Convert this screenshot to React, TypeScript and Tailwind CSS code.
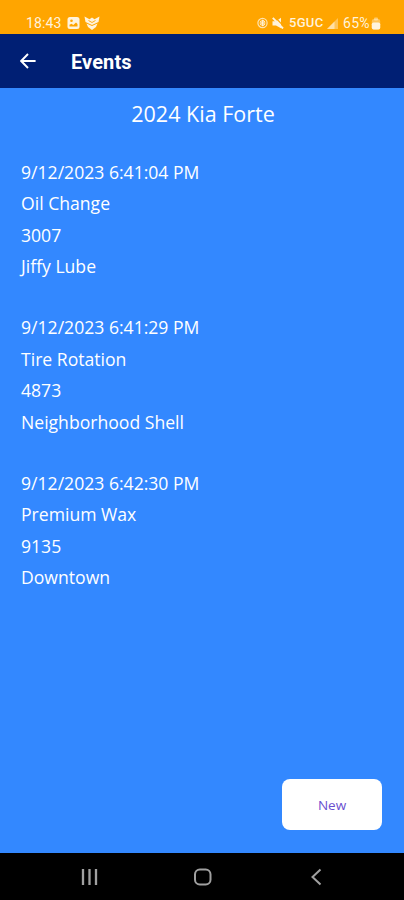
interface ServiceEvent {
  date: string;
  title: string;
  mileage: string;
  location: string;
}

const events: ServiceEvent[] = [
  { date: "9/12/2023 6:41:04 PM", title: "Oil Change", mileage: "3007", location: "Jiffy Lube" },
  { date: "9/12/2023 6:41:29 PM", title: "Tire Rotation", mileage: "4873", location: "Neighborhood Shell" },
  { date: "9/12/2023 6:42:30 PM", title: "Premium Wax", mileage: "9135", location: "Downtown" },
];

function StatusBar() {
  return (
    <div className="flex h-[34px] items-end justify-between bg-[#ffa500] pr-[23px] pb-1 pl-[26px] font-['Roboto',sans-serif] text-[14px] text-[#fff3dc]">
      <div className="flex h-[14px] items-center">
        <span className="w-[36px] leading-[14px] tracking-[0.1px] whitespace-nowrap">18:43</span>
        <svg className="ml-[5px]" width="13" height="12" viewBox="0 0 13 12">
          <rect x="0.5" width="12" height="12" rx="2.5" fill="currentColor" />
          <path d="M2.5 9.5 V7.8 L4.5 6.8 L6.3 8 L9 5.5 L10.5 7 V9.5 Z" fill="#ffa500" />
          <circle cx="4.5" cy="3.8" r="1.3" fill="#ffa500" />
        </svg>
        <svg className="ml-1" width="16" height="14" viewBox="0 0 16 14" fill="currentColor">
          <path d="M0.5 0.5 L5.5 3.2 L8 1.5 L10.5 3.2 L15.5 0.5 L14.5 6 L8 9 L1.5 6 Z" />
          <path d="M2.5 7.5 L8 10 L13.5 7.5 L12 11 L8 14 L4 11 Z" />
          <path d="M4.5 4.5 L8 6.5 L11.5 4.5" fill="none" stroke="#ffa500" strokeWidth="0.9" />
        </svg>
      </div>
      <div className="flex h-[14px] items-center">
        <svg width="11" height="12" viewBox="0 0 11 12" fill="none" stroke="currentColor">
          <circle cx="5.5" cy="6" r="4.6" strokeWidth="1.2" opacity="0.8" />
          <circle cx="5.5" cy="6" r="2.4" strokeWidth="1" opacity="0.8" />
          <path d="M3.5 4.5 L7.5 7.5 L5.5 9 V3 L7.5 4.5 L3.5 7.5" strokeWidth="0.9" />
        </svg>
        <svg className="ml-1" width="12" height="12" viewBox="0 0 12 12">
          <path d="M0.5 4.2 H4 L9 0.8 V11.2 L4 8.4 H0.5 Z" fill="currentColor" />
          <path d="M3 0 L12 9.5" stroke="#ffa500" strokeWidth="1.2" />
          <path d="M0.8 0.8 L11 11.5" stroke="currentColor" strokeWidth="1.9" />
        </svg>
        <span className="ml-[5px] w-[37px] text-[13px] leading-[14px] font-medium tracking-[0.3px] whitespace-nowrap">5GUC</span>
        <svg className="ml-px" width="11" height="11" viewBox="0 0 11 11" fill="currentColor">
          <path d="M0 11 L11 0 V11 Z" opacity="0.4" />
          <path d="M0 11 L7.5 3.5 V11 Z" opacity="0.6" />
        </svg>
        <span className="ml-[5px] w-[28px] text-[14px] leading-[14px] tracking-[0.3px] whitespace-nowrap">65%</span>
        <svg width="10" height="13" viewBox="0 0 10 13" fill="currentColor">
          <rect x="3" y="0.5" width="4" height="3" rx="1" opacity="0.5" />
          <rect x="0.8" y="2" width="8.4" height="10.5" rx="2" opacity="0.4" />
          <rect x="0.8" y="5.5" width="8.4" height="7" rx="1.8" />
        </svg>
      </div>
    </div>
  );
}

function Header() {
  return (
    <header className="flex h-[54px] items-center bg-[#001f74] pl-5 text-white">
      <svg width="16" height="16" viewBox="0 0 16 16" fill="none" stroke="currentColor" strokeWidth="1.9">
        <path d="M15.6 8 H1.4 M8 1 L1.2 8 L8 15" />
      </svg>
      <h1 className="mt-[2px] ml-[35px] font-['Roboto',sans-serif] text-[20px] leading-6 font-bold tracking-[0.1px]">Events</h1>
    </header>
  );
}

function NavBar() {
  return (
    <nav className="h-[47px] bg-black text-[#a0a0a0]">
      <svg width="404" height="47" viewBox="0 0 404 47" fill="none" stroke="currentColor" strokeWidth="2">
        <path d="M83 16 V32 M89.5 16 V32 M96 16 V32" strokeWidth="2.3" />
        <rect x="195" y="16.5" width="15.5" height="15" rx="4.8" />
        <path d="M320.5 16.5 L312.5 24 L320.5 31.5" />
      </svg>
    </nav>
  );
}

export default function App() {
  return (
    <div className="flex h-[900px] w-[404px] flex-col overflow-hidden bg-[#3388ff]">
      <StatusBar />
      <Header />
      <main className="flex flex-1 flex-col font-['Open_Sans',sans-serif] text-white">
        <h2 className="mt-[10px] pl-[2px] text-center text-[21.5px] leading-8">2024 Kia Forte</h2>
        <div className="mt-[26.8px] flex flex-col gap-[29.6px] pl-[21px] text-[17.6px] leading-[31.5px]">
          {events.map((event) => (
            <div key={event.date}>
              <p>{event.date}</p>
              <p>{event.title}</p>
              <p>{event.mileage}</p>
              <p>{event.location}</p>
            </div>
          ))}
        </div>
        <button className="mt-auto mr-[22px] mb-[23px] h-[51px] w-[100px] self-end rounded-lg bg-white pt-[2px] text-[13.5px] text-[#6a4fcf]">
          New
        </button>
      </main>
      <NavBar />
    </div>
  );
}
